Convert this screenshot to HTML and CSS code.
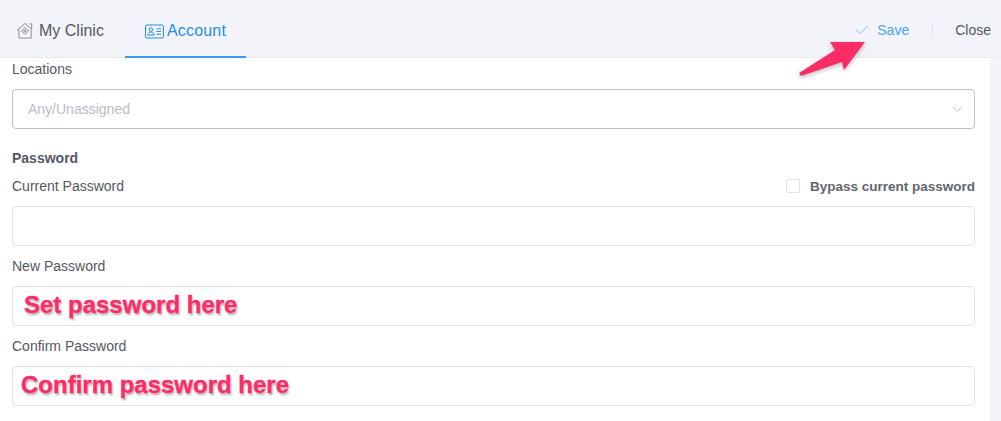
FILE: index.html
```html
<!DOCTYPE html>
<html lang="en">
<head>
    <meta charset="UTF-8">
    <title>Account</title>
    <link rel="stylesheet" href="styles.css">
</head>
<body>
    <header class="topbar">
        <nav class="tabs">
            <a class="tab" href="#">
                <svg class="tab-icon" width="18" height="18" viewBox="0 0 18 18" fill="none" stroke="#8a8d94" stroke-width="1">
                    <path d="M1 8.500 9 1.500l6.500 5.500M13.500 1.800h2.200v5.400M3 7.500v8.600h12.200V7.500"/>
                    <path d="M9 5.500 12.500 9 9 12.500 5.500 9z"/>
                    <circle cx="9" cy="9" r="1"/>
                </svg>
                My Clinic
            </a>
            <a class="tab tab-active" href="#">
                <svg class="tab-icon" width="19" height="15" viewBox="0 0 19 15" fill="none" stroke="#1f8ceb" stroke-width="1">
                    <rect x="0.500" y="1" width="18" height="13" rx="1.500"/>
                    <circle cx="6" cy="5.600" r="1.800"/>
                    <path d="M2.800 11c.3-2 1.600-3 3.200-3s2.900 1 3.200 3zM11.500 4.800h4.500M11.500 7.500h4.500M11.500 10.200h4.500"/>
                </svg>
                Account
            </a>
        </nav>
        <div class="actions">
            <a class="save" href="#">
                <svg width="14" height="10" viewBox="0 0 14 10" fill="none" stroke="#7fbdf5" stroke-width="1">
                    <path d="M1 4.500 5 8.500 13 .8"/>
                </svg>
                Save
            </a>
            <span class="divider"></span>
            <a class="close" href="#">Close</a>
        </div>
    </header>

    <main class="content">
        <form class="panel">
            <label class="field-label label-first">Locations</label>
            <div class="input input-select">
                <span class="placeholder">Any/Unassigned</span>
                <svg width="11" height="7" viewBox="0 0 11 7" fill="none" stroke="#c3c6cd" stroke-width="1">
                    <path d="M.5.500l5 5 5-5"/>
                </svg>
            </div>

            <h3 class="section-title">Password</h3>
            <div class="label-row">
                <label class="field-label">Current Password</label>
                <label class="bypass"><span class="checkbox"></span>Bypass current password</label>
            </div>
            <div class="input"></div>

            <label class="field-label">New Password</label>
            <div class="input"></div>

            <label class="field-label">Confirm Password</label>
            <div class="input"></div>
        </form>
    </main>

    <!-- annotations over the screenshot -->
    <svg class="arrow" width="66" height="34" viewBox="0 0 66 34">
        <path d="M0 31 36 8 31 0 66 0 45 28 43 20 2 34z" fill="#fb2d68"/>
    </svg>
    <span class="note note-set">Set password here</span>
    <span class="note note-confirm">Confirm password here</span>
</body>
</html>
```

FILE: styles.css
```css
* {
    box-sizing: border-box;
}

body {
    margin: 0;
    height: 421px;
    overflow: hidden;
    position: relative;
    background-color: #f2f4f9;
    color: #55585f;
    font-family: "Liberation Sans", Arial, sans-serif;
    font-size: 14px;
}

a {
    text-decoration: none;
    color: inherit;
}

/* Barre du haut */
.topbar {
    height: 58px;
    display: flex;
    justify-content: space-between;
    border-bottom: 1px solid #e6e8ee;
}

.tabs {
    display: flex;
}

.tab {
    display: flex;
    align-items: center;
    gap: 5px;
    height: 58px;
    padding: 4px 16px 0;
    font-size: 16px;
    color: #55585f;
}

.tab-active {
    margin-left: 5px;
    padding: 6px 20px 0;
    gap: 3px;
    letter-spacing: 0.2px;
    color: #1f8ceb;
    border-bottom: 2px solid #3d98ef;
}

.actions {
    display: flex;
    align-items: center;
    height: 58px;
    padding: 2px 10px 0 0;
}

.save {
    display: flex;
    align-items: center;
    gap: 8px;
    color: #4aa3f5;
    font-size: 14px;
}

.divider {
    width: 1px;
    height: 14px;
    margin: 0 22px 0 23px;
    background-color: #dfe1e6;
}

.close {
    font-size: 14px;
    color: #55585f;
}

/* Formulaire */
.content {
    width: 990px;
    height: 363px;
    background-color: #ffffff;
    padding: 0 15px 0 12px;
}

.field-label {
    display: block;
    height: 40px;
    padding-top: 12px;
    line-height: 16px;
}

.label-first {
    height: 31px;
    padding-top: 3px;
}

.input {
    height: 40px;
    border: 1px solid #e0e0e9;
    border-radius: 4px;
}

.input-select {
    display: flex;
    align-items: center;
    justify-content: space-between;
    padding: 0 11px 0 15px;
    border-color: #bcbfca;
}

.placeholder {
    color: #b9bcc4;
}

.section-title {
    margin: 0;
    padding-top: 21px;
    height: 37px;
    font-size: 14px;
    line-height: 16px;
}

.label-row {
    display: flex;
    justify-content: space-between;
    height: 40px;
}

.bypass {
    display: flex;
    align-items: flex-start;
    gap: 10px;
    padding-top: 13px;
    line-height: 16px;
    font-size: 13.500px;
    font-weight: bold;
    color: #63666d;
}

.checkbox {
    width: 14px;
    height: 14px;
    border: 1px solid #e0e0e9;
    border-radius: 2px;
}

/* Annotations */
.arrow {
    position: absolute;
    left: 799px;
    top: 42px;
    overflow: visible;
    filter: drop-shadow(0 2px 2px rgba(0, 0, 0, 0.25));
}

.note {
    position: absolute;
    color: #fb2d68;
    font-size: 24px;
    font-weight: bold;
    line-height: 28px;
    white-space: nowrap;
    -webkit-text-stroke: 0.4px #fb2d68;
    text-shadow: 0 0 2px #ffffff, 1px 2px 2px rgba(0, 0, 0, 0.35);
}

.note-set {
    left: 24px;
    top: 291px;
}

.note-confirm {
    left: 21px;
    top: 371px;
}
```
